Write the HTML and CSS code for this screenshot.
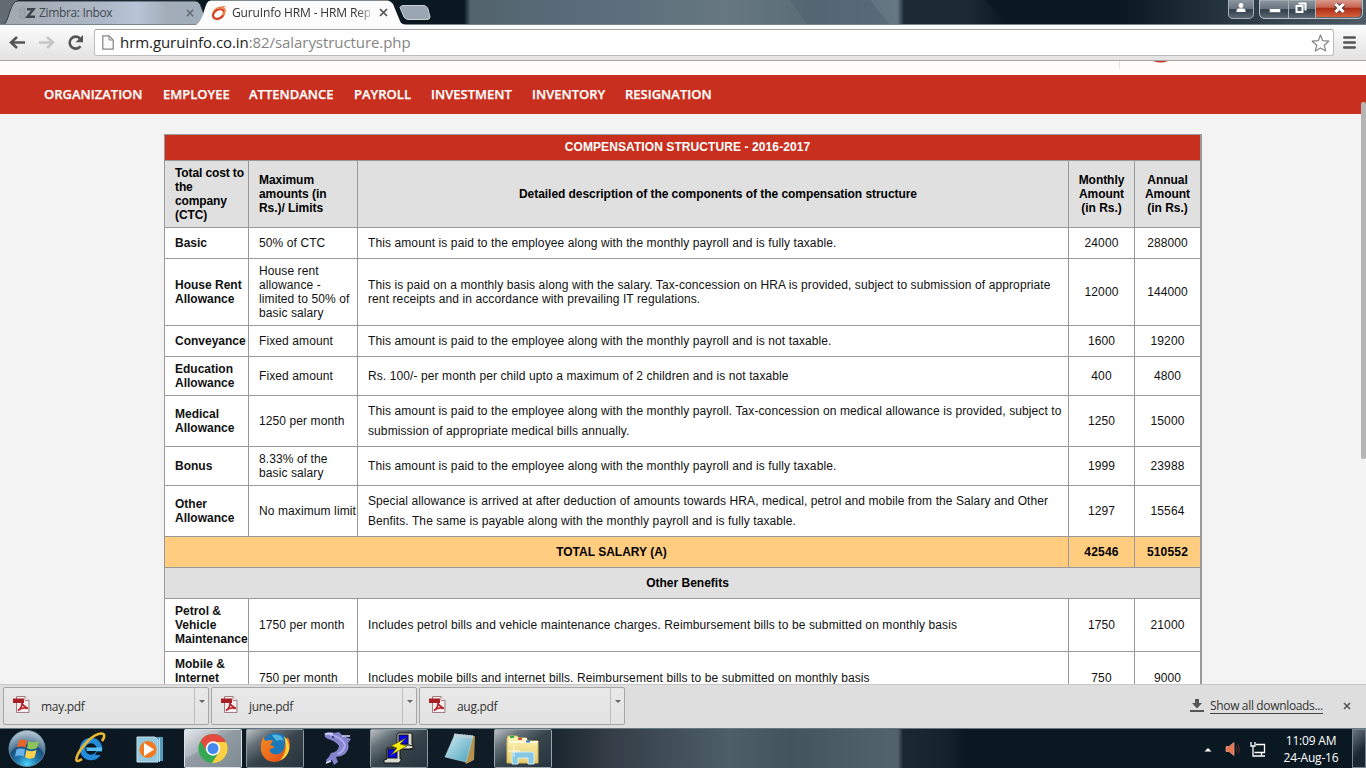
FILE: index.html
```html
<!DOCTYPE html>
<html lang="en">
<head>
<meta charset="utf-8">
<title>GuruInfo HRM - HRM Reports</title>
<link rel="stylesheet" href="styles.css">
</head>
<body>
<div class="screen">
<header class="titlebar">
  <svg class="glass" width="1366" height="25" viewBox="0 0 1366 25">
    <defs>
      <linearGradient id="gl" x1="0" x2="1"><stop offset="0" stop-color="#0a1822"/><stop offset=".015" stop-color="#53646e"/><stop offset=".3" stop-color="#5a6d7b"/><stop offset=".6" stop-color="#66777f"/><stop offset=".8" stop-color="#5a6c77"/><stop offset=".985" stop-color="#667884"/><stop offset="1" stop-color="#1c2a34"/></linearGradient>
      <linearGradient id="tabg" x1="0" x2="1"><stop offset="0" stop-color="#a2a9ae"/><stop offset=".5" stop-color="#aeb9c9"/><stop offset=".65" stop-color="#b7c5d7"/><stop offset=".8" stop-color="#a3adb9"/><stop offset="1" stop-color="#a0adba"/></linearGradient>
      <linearGradient id="rt" x1="0" x2="1"><stop offset="0" stop-color="#0a1822"/><stop offset="1" stop-color="#4c5b65"/></linearGradient>
      <linearGradient id="edge" x1="0" x2="1"><stop offset="0" stop-color="#1c2a34"/><stop offset=".6" stop-color="#1c2a34"/><stop offset="1" stop-color="#0a1822"/></linearGradient>
      <linearGradient id="cl" x1="0" x2="0" y1="0" y2="1"><stop offset="0" stop-color="#d99a8c"/><stop offset=".42" stop-color="#c86450"/><stop offset=".5" stop-color="#ad2d16"/><stop offset="1" stop-color="#d5603c"/></linearGradient>
      <linearGradient id="wb" x1="0" x2="0" y1="0" y2="1"><stop offset="0" stop-color="#8b969f"/><stop offset=".48" stop-color="#68747e"/><stop offset=".52" stop-color="#303e49"/><stop offset="1" stop-color="#5f6c76"/></linearGradient>
    </defs>
    <rect width="1366" height="25" fill="#0a1822"/>
    <path d="M0 0H18L6 25H0Z" fill="#626b72"/>
    <rect x="464" width="440" height="25" fill="url(#gl)"/>
    <path d="M790 0H870L890 25H808Z" fill="#50636f" opacity=".6"/>
    <path d="M904 0H985L1008 25H904Z" fill="url(#edge)"/>
    <rect x="1120" width="246" height="25" fill="url(#rt)"/>
    <path d="M4 24.500C8 22 10 7 14 3Q15 1 18 1H195Q198 1 200 4L208 24.500Z" fill="url(#tabg)" stroke="#303d47"/>
    <path d="M400 7.500Q401 5.500 403 5.500H424Q427 6 428 9L430 17Q430 19.500 427 19.500H408Q405 19 404 17Z" fill="#9aa6b1" stroke="#cbd1d6"/>
    <path d="M0 24.500H1366" stroke="#7c848a"/>
    <path d="M196 25C203 21 204 8 207 3Q208 .5 211 .5H388Q391 1 393 4L400 21Q401 24 406 25Z" fill="#fcfcfc"/>
    <path d="M1228.500 0V14Q1228.500 18.500 1233 18.500H1248Q1253.500 18.500 1253.500 14V0" fill="url(#wb)" stroke="#a4afb7"/>
    <path d="M1259.500 0V13Q1259.500 18.500 1265 18.500H1357Q1362.500 18.500 1362.500 13V0Z" fill="url(#wb)" stroke="#b9c1c7"/>
    <path d="M1316 0V17H1356Q1361 17 1361 12V0Z" fill="url(#cl)"/>
    <path d="M1288.500 0V18M1315.500 0V18" stroke="#a9b2b9"/>
    <path d="M1236.500 12V10Q1237 8.500 1239 8.500H1243Q1245 8.500 1245.500 10V12Z" fill="#fff"/><circle cx="1241" cy="5.500" r="2.400" fill="#fff"/>
    <rect x="1269.500" y="8.500" width="11" height="4" rx="1" fill="#fff" stroke="#68727b"/>
    <path d="M1298.500 3.500H1305.500V10.500" fill="none" stroke="#fff" stroke-width="2"/><rect x="1296.500" y="6" width="6" height="6" fill="#53606b" stroke="#fff" stroke-width="2"/>
    <path d="M1335.500 4.500 1343.500 11.500M1343.500 4.500 1335.500 11.500" stroke="#5d4243" stroke-width="5"/><path d="M1335.500 4 1343.500 12M1343.500 4 1335.500 12" stroke="#fff" stroke-width="3"/>
  </svg>
  <div class="tab tab-idle">
    <svg width="17" height="12" viewBox="0 0 17 12"><path d="M1 1 6 6 1 11M3 1H6V11H1V1" fill="none" stroke="#90979d"/><path d="M8 2.200H14.500L8.500 9.800H16" fill="none" stroke="#3d4348" stroke-width="2.400"/></svg>
    <span class="tab-text t1">Zimbra: Inbox</span>
    <svg class="x" width="8" height="8" viewBox="0 0 8 8"><path d="M.8.8 7.200 7.200M7.200.8.8 7.200" stroke="#62696f" stroke-width="1.500"/></svg>
  </div>
  <div class="tab tab-live">
    <svg width="18" height="16" viewBox="0 0 18 16"><ellipse cx="7.500" cy="9" rx="6" ry="4.300" transform="rotate(-35 7.500 9)" fill="#fff" stroke="#d9401f" stroke-width="2.300"/><path d="M1 7Q5 0 16 1Q12 1.500 11 4Q5 2.500 1 7Z" fill="#ee8154"/><path d="M12 2.500Q16 5 12 10" fill="none" stroke="#ef8b55" stroke-width="2"/></svg>
    <span class="tab-text t2">GuruInfo HRM - HRM Rep</span>
    <svg class="x" width="9" height="9" viewBox="0 0 9 9"><path d="M1 1 8 8M8 1 1 8" stroke="#555" stroke-width="1.700"/></svg>
  </div>
</header>
<div class="toolbar">
  <svg class="navicons" width="94" height="35" viewBox="0 0 94 35">
    <path d="M11 17.500H25M17 12 11 17.500 17 23" fill="none" stroke="#555" stroke-width="2.500"/>
    <path d="M39 17.500H52M47 12 53 17.500 47 23" fill="none" stroke="#c6c6c6" stroke-width="2.500"/>
    <path d="M80.500 21.200A6 6 0 1 1 80 13.500" fill="none" stroke="#555" stroke-width="2.600"/><path d="M83 10V17.300H75.500Z" fill="#555"/>
  </svg>
  <div class="omnibox">
    <svg width="12" height="16" viewBox="0 0 12 16"><path d="M.8.800H7L11.200 5V14.200H.8Z" fill="#fafafa" stroke="#858585" stroke-width="1.200"/><path d="M7 1V5H11" fill="none" stroke="#858585"/></svg>
    <span class="url"><b>hrm.guruinfo.co.in</b>:82/salarystructure.php</span>
    <svg class="star" width="19" height="18" viewBox="0 0 19 18"><path d="M9.500 1 11.700 6.700 17.800 7.200 13.200 11.200 14.700 17 9.500 13.900 4.300 17 5.800 11.200 1.200 7.200 7.300 6.700Z" fill="#fff" stroke="#858585" stroke-width="1.200" stroke-linejoin="round"/></svg>
  </div>
  <svg class="burger" width="13" height="13" viewBox="0 0 13 13"><path d="M1.300 1.500H11.700M1.300 6.500H11.700M1.300 11.500H11.700" stroke="#555" stroke-width="2.600" stroke-linecap="round"/></svg>
</div>
<main class="page">
  <div class="brandstrip"><svg width="60" height="14" viewBox="0 0 60 14"><path d="M.5 0V8" stroke="#e5e3e2"/><path d="M34 0H49Q42 3 34 0Z" fill="#cb321f"/></svg></div>
  <nav class="menu">
    <a class="m1">ORGANIZATION</a><a class="m2">EMPLOYEE</a><a class="m3">ATTENDANCE</a><a class="m4">PAYROLL</a><a class="m5">INVESTMENT</a><a class="m6">INVENTORY</a><a class="m7">RESIGNATION</a>
  </nav>
  <i class="scroll"></i>
  <section class="sheet">
    <div class="row wide banner h26"><div class="c">COMPENSATION STRUCTURE - 2016-2017</div></div>
    <div class="row head h67"><div class="tight">Total cost to<br>the<br>company<br>(CTC)</div><div>Maximum<br>amounts (in<br>Rs.)/ Limits</div><div class="c">Detailed description of the components of the compensation structure</div><div class="c">Monthly<br>Amount<br>(in Rs.)</div><div class="c">Annual<br>Amount<br>(in Rs.)</div></div>
    <div class="row h31"><div>Basic</div><div>50% of CTC</div><div>This amount is paid to the employee along with the monthly payroll and is fully taxable.</div><div>24000</div><div>288000</div></div>
    <div class="row h67"><div>House Rent<br>Allowance</div><div>House rent<br>allowance -<br>limited to 50% of<br>basic salary</div><div>This is paid on a monthly basis along with the salary. Tax-concession on HRA is provided, subject to submission of appropriate<br>rent receipts and in accordance with prevailing IT regulations.</div><div>12000</div><div>144000</div></div>
    <div class="row h31"><div>Conveyance</div><div>Fixed amount</div><div>This amount is paid to the employee along with the monthly payroll and is not taxable.</div><div>1600</div><div>19200</div></div>
    <div class="row h39"><div>Education<br>Allowance</div><div>Fixed amount</div><div>Rs. 100/- per month per child upto a maximum of 2 children and is not taxable</div><div>400</div><div>4800</div></div>
    <div class="row h51"><div>Medical<br>Allowance</div><div>1250 per month</div><div class="loose">This amount is paid to the employee along with the monthly payroll. Tax-concession on medical allowance is provided, subject to<br>submission of appropriate medical bills annually.</div><div>1250</div><div>15000</div></div>
    <div class="row h39"><div>Bonus</div><div>8.33% of the<br>basic salary</div><div>This amount is paid to the employee along with the monthly payroll and is fully taxable.</div><div>1999</div><div>23988</div></div>
    <div class="row h51"><div>Other<br>Allowance</div><div>No maximum limit</div><div class="loose closer">Special allowance is arrived at after deduction of amounts towards HRA, medical, petrol and mobile from the Salary and Other<br>Benfits. The same is payable along with the monthly payroll and is fully taxable.</div><div>1297</div><div>15564</div></div>
    <div class="row total h31"><div class="c">TOTAL SALARY (A)</div><div class="c">42546</div><div class="c">510552</div></div>
    <div class="row wide other h31"><div class="c">Other Benefits</div></div>
    <div class="row h53"><div>Petrol &amp;<br>Vehicle<br>Maintenance</div><div>1750 per month</div><div>Includes petrol bills and vehicle maintenance charges. Reimbursement bills to be submitted on monthly basis</div><div>1750</div><div>21000</div></div>
    <div class="row h53"><div>Mobile &amp;<br>Internet</div><div>750 per month</div><div>Includes mobile bills and internet bills. Reimbursement bills to be submitted on monthly basis</div><div>750</div><div>9000</div></div>
  </section>
</main>
<svg class="symbols" width="0" height="0"><symbol id="pdf" viewBox="0 0 17 17"><path d="M3.500.5H12L16 4.500V16.500H3.500Z" fill="#f4efef" stroke="#a27f7f"/><path d="M12 .5V4.500H16" fill="#fff" stroke="#a27f7f"/><path d="M0 2.500H11V7H0Z" fill="#a91f25"/><path d="M9 7Q10 10 15 12.500Q10 10.500 5 14.500Q9 12 9 7Z" fill="none" stroke="#b92329" stroke-width="1.600"/></symbol></svg>
<div class="shelf">
  <div class="file"><svg width="17" height="17"><use href="#pdf"/></svg><span>may.pdf</span><i><b></b></i></div>
  <div class="file"><svg width="17" height="17"><use href="#pdf"/></svg><span>june.pdf</span><i><b></b></i></div>
  <div class="file"><svg width="17" height="17"><use href="#pdf"/></svg><span>aug.pdf</span><i><b></b></i></div>
  <div class="all"><svg width="14" height="14" viewBox="0 0 14 14"><path d="M5 0H9V4H12L7 9.500 2 4H5ZM0 11H14V13H0Z" fill="#555"/></svg><span>Show all downloads...</span><svg class="close" width="8" height="8" viewBox="0 0 8 8"><path d="M1 1 7 7M7 1 1 7" stroke="#555" stroke-width="1.600"/></svg></div>
</div>
<footer class="taskbar">
  <svg class="apps" width="610" height="40" viewBox="0 0 610 40">
    <defs>
      <radialGradient id="orb" cx=".5" cy=".95" r=".95"><stop offset="0" stop-color="#4fd6fb"/><stop offset=".3" stop-color="#1f7bb0"/><stop offset=".58" stop-color="#1b4f7c"/><stop offset=".62" stop-color="#4f7895"/><stop offset="1" stop-color="#c3d0d9"/></radialGradient>
      <linearGradient id="btn" x1="0" y1="0" x2="1" y2="1"><stop offset="0" stop-color="#e0e5e8"/><stop offset=".45" stop-color="#929ba3"/><stop offset="1" stop-color="#7e8993"/></linearGradient>
      <linearGradient id="btd" x1="0" y1="0" x2="1" y2="1"><stop offset="0" stop-color="#bfc5c8"/><stop offset=".25" stop-color="#67727a"/><stop offset=".5" stop-color="#38444c"/><stop offset="1" stop-color="#26343d"/></linearGradient>
      <linearGradient id="ff" x1="0" y1="0" x2="1" y2="1"><stop offset="0" stop-color="#f08a22"/><stop offset=".5" stop-color="#ee6c1c"/><stop offset="1" stop-color="#d7441a"/></linearGradient>
      <linearGradient id="np" x1="0" y1="0" x2="1" y2="1"><stop offset="0" stop-color="#d6edf2"/><stop offset="1" stop-color="#46a0bd"/></linearGradient>
      <linearGradient id="fd" x1="0" y1="0" x2="0" y2="1"><stop offset="0" stop-color="#fff5b4"/><stop offset="1" stop-color="#e8cc6c"/></linearGradient>
    </defs>
    <circle cx="27" cy="20.500" r="18" fill="url(#orb)" stroke="#5f87a0"/>
    <path d="M19 12.500Q22 10.500 27 12.500L25.500 19.500Q21 17.500 17 19.500Z" fill="#e8652c"/><path d="M28.500 13Q33 15.500 39 13L37 20Q31 22.500 27 20Z" fill="#91c456"/><path d="M16.500 21.500Q20 19.500 25 21.500L23.500 28.500Q19 26.500 15 28.500Z" fill="#68b3e9"/><path d="M26.500 22Q31 24.500 36.500 22L34.500 29.500Q29 32 25 29Z" fill="#ffd24c"/>
    <circle cx="91" cy="21" r="8.500" fill="none" stroke="#258cdc" stroke-width="5.500"/><path d="M86 19.500H102V23H87Z" fill="#5bc0f3"/><path d="M97 23.500H104V27H95Z" fill="#0c1922"/><path d="M102 13C109 3 98 3 88 13C76 25 72 38 82 31" fill="none" stroke="#e9b934" stroke-width="2.600"/>
    <path d="M145 9H163V33H150Z" fill="#579cbd"/><path d="M137 9H155L158 12V34H137Z" fill="#93c8df" stroke="#c6e3ed"/><path d="M159.500 10V34" stroke="#b5dcea"/><circle cx="148" cy="21.500" r="8.500" fill="#f27a20"/><path d="M144 15V28L154 21.500Z" fill="#fff"/>
    <rect x="184.500" y="1.500" width="57" height="38" rx="1" fill="url(#btn)" stroke="#dce1e4"/><path d="M185 30Q207 22 220 2H185Z" fill="#fff" opacity=".17"/>
    <circle cx="213" cy="20.500" r="14.500" fill="#35a853"/><path d="M200.500 13.200A14.500 14.500 0 0 1 226 14L213 14.500Q207 15 206 22Z" fill="#e44b3f"/><path d="M213 14H226A14.500 14.500 0 0 1 212 35L219 24Z" fill="#fdd043"/><circle cx="213" cy="20.500" r="7.200" fill="#fff"/><circle cx="213" cy="20.500" r="5.500" fill="#4788ed"/>
    <rect x="246.500" y="1.500" width="57" height="38" rx="1" fill="url(#btd)" stroke="#8e999f"/>
    <circle cx="275.500" cy="18.500" r="13.500" fill="#1c78b8"/><path d="M272 7Q281 5 284 13Q280 11 277 13Q273 9 272 7Z" fill="#51b6df"/>
    <path d="M264 8Q263 11 266 13Q270 11 273 13L270 17Q275 18 274 20Q269 20 270 24Q276 29 282 24Q286 19 285 12L288 9Q292 17 288 25Q283 34 274 34Q263 33 261 23Q260 14 264 8Z" fill="url(#ff)"/><path d="M284 8Q292 16 288 25Q285 31 280 32Q289 23 284 8Z" fill="#fbd437"/>
    <path d="M324.500 5.500Q329 3 334 5L339 4L343 8L351 11L348 15Q350 21 345 26Q341 29 336 29L338 34L334 37L332 32L327 35L326 32Q329 30 331 25Q338 24 339 18Q336 13 328 11L325 9Z" fill="#8582cd"/><path d="M330 7Q342 9 345 17Q344 23 338 26" fill="none" stroke="#adaceb" stroke-width="2"/><path d="M325 6H333M342 8H350M326 35 331 33" stroke="#dddcf9" stroke-width="1.500"/><circle cx="333" cy="9" r="1" fill="#262553"/>
    <rect x="370.500" y="1.500" width="57" height="38" rx="1" fill="url(#btd)" stroke="#8e999f"/>
    <path d="M398 5H412V16L414 19V21H397V7Z" fill="#d9d9d0" stroke="#111"/><rect x="399" y="7" width="9" height="9" fill="#0707e8" stroke="#111"/><path d="M394 17H409L413 18V20L410 21H394Z" fill="#d9d9d0" stroke="#111"/><path d="M387 20H400V31H402L399 35H384V32L387 31Z" fill="#d9d9d0" stroke="#111"/><rect x="388" y="21" width="9" height="9" fill="#0707e8" stroke="#111"/><path d="M406 10 391 18 397 20 391 27 407 18 400 16Z" fill="#f5ec08" stroke="#464310" stroke-width=".6"/>
    <path d="M456 7 475 8 474 32 466 36Z" fill="#b1934f"/><path d="M455 6 473 8 466 34 445 29Z" fill="url(#np)" stroke="#b2d5dd" stroke-width=".6"/><path d="M454 7 473 9" stroke="#cad1d3" stroke-width="3" stroke-dasharray="1.500 1"/>
    <rect x="494.500" y="1.500" width="57" height="38" rx="1" fill="url(#btd)" stroke="#9ca4a7"/>
    <path d="M508 8H517L519 10H526L528 13H538V35H507V11Z" fill="url(#fd)" stroke="#d2b85c"/><path d="M509 14H538M517 11H527" stroke="#fffadf" stroke-width="2"/><path d="M510 9H514" stroke="#35a84a" stroke-width="2"/><path d="M518 11H522" stroke="#d84d34" stroke-width="2"/><path d="M526 13.500H530" stroke="#337ed0" stroke-width="2"/><path d="M512 36V26Q512 24 515 24H531Q534 24 534 26V36H528V30H518V36Z" fill="#84c8e5" stroke="#d3edf5"/><path d="M514 17V29M508 23H520" stroke="#fff" stroke-width=".8"/>
  </svg>
  <div class="tray">
    <svg width="70" height="20" viewBox="0 0 70 20"><path d="M1.500 12.500 5 9 8.500 12.500Z" fill="#fff"/><path d="M23 7.500H26L31 3.500V16.500L26 12.500H23Z" fill="#e57652" stroke="#f0a38c" stroke-width=".7"/><path d="M33 7Q35 10 33 13M35 5Q38 10 35 15" fill="none" stroke="#5a2a25"/><path d="M53 5.500H61.500V13.500H51.500M55 17H62M58.500 14V17" fill="none" stroke="#fff" stroke-width="1.300"/><path d="M48 3V7H52V3M50 7V17H55" fill="none" stroke="#fff" stroke-width="1.300"/></svg>
    <div class="clock">11:09 AM<br><span>24-Aug-16</span></div>
    <i class="peek"></i>
  </div>
</footer>
</div>
</body>
</html>
```
FILE: styles.css
```css
* { box-sizing: border-box; }
body { margin: 0; overflow: hidden; }
.screen { width: 1366px; height: 768px; display: flex; flex-direction: column; overflow: hidden; font-family: "Open Sans", "Noto Sans", sans-serif; }
svg { display: block; flex: none; }
.titlebar { height: 25px; position: relative; display: flex; flex: none; }
.glass { position: absolute; left: 0; top: 0; }
.tab { position: relative; display: flex; align-items: center; height: 25px; font-size: 12px; white-space: nowrap; }
.tab-idle { width: 197px; padding-left: 19px; color: #42494f; }
.tab-live { width: 209px; padding-left: 14px; color: #333; }
.tab-text { flex: none; }
.t1 { margin-left: 3px; width: 146px; letter-spacing: -.35px; }
.t2 { margin-left: 3px; width: 138px; letter-spacing: -.15px; -webkit-mask-image: linear-gradient(90deg, #000 90%, rgba(0,0,0,.35)); mask-image: linear-gradient(90deg, #000 90%, rgba(0,0,0,.35)); }
.x { margin-left: 1px; }
.tab-live .x { margin-left: 9px; }
.toolbar { height: 36px; flex: none; display: flex; align-items: flex-start; background: linear-gradient(#fcfcfc, #e2e2e2); border-bottom: 1px solid #a6a6a6; }
.omnibox { width: 1240px; height: 27px; margin-top: 4px; border: 1px solid #bcbcbc; border-top-color: #a3a3a3; border-radius: 3px; background: #fff; display: flex; align-items: center; padding-left: 7px; }
.url { margin-left: 6px; font-size: 15px; line-height: 25px; color: #858585; letter-spacing: -.07px; white-space: nowrap; }
.url b { font-weight: 400; color: #222; }
.star { margin-left: auto; margin-right: 3px; }
.burger { margin: 11px 0 0 9px; }
.page { height: 623px; flex: none; background: #f3f3f3; overflow: hidden; position: relative; }
.brandstrip { height: 14px; background: #fefcfb; padding-left: 1119px; }
.menu { height: 39px; background: #c92f1e; color: #fff; display: flex; align-items: center; padding: 0 0 2px 44px; font-size: 13px; font-weight: 600; white-space: nowrap; -webkit-text-stroke: .25px #fff; }
.menu a { flex: none; }
.m1 { width: 119px; } .m2 { width: 86px; } .m3 { width: 105px; } .m4 { width: 77px; } .m5 { width: 101px; } .m6 { width: 93px; }
.scroll { position: absolute; right: 0; top: 41px; width: 5px; height: 357px; background: #b5b5b5; border-radius: 2px; }
.sheet { width: 1038px; margin: 20px 0 0 164px; border-right: 2px solid #999; background: #fff; color: #111; font: 12px/14px "Liberation Sans", Arial, sans-serif; letter-spacing: .1px; }
.row { display: grid; grid-template-columns: 84px 109px 711px 66px 66px; }
.row > div { border-top: 1px solid #999; border-left: 1px solid #999; padding-left: 10px; display: flex; align-items: center; white-space: nowrap; }
.row > div:first-child { font-weight: 700; letter-spacing: 0; }
.row > div:nth-child(n+4), .row > .c { justify-content: center; text-align: center; }
.row > div:nth-child(n+4), .total > .c { padding-left: 0; }
.row.total > .c:first-child { padding-right: 10px; }
.row.wide { grid-template-columns: 1036px; }
.row.total { grid-template-columns: 904px 66px 66px; background: #ffcc80; font-weight: 700; color: #000; letter-spacing: .2px; }
.head { background: #e0e0e0; font-weight: 700; color: #000; letter-spacing: -.05px; }
.row > .tight:first-child { letter-spacing: -.12px; }
.banner { background: #c92f1e; color: #fff; }
.banner > .c { padding-bottom: 2px; }
.row.banner > .c:first-child { letter-spacing: .09px; }
.other { background: #e0e0e0; color: #000; }
.row .loose { line-height: 20px; }
.row .closer { letter-spacing: .09px; }
.h26 { height: 26px; } .h31 { height: 31px; } .h39 { height: 39px; } .h51 { height: 51px; } .h53 { height: 53px; } .h67 { height: 67px; }
.h53:last-child > div:first-child { align-items: flex-start; padding-top: 5px; }
.symbols { position: absolute; }
.shelf { height: 44px; flex: none; background: #dedede; border-top: 1px solid #c9c9c9; display: flex; padding: 2px 0 0 3px; gap: 2px; font-size: 12px; color: #333; }
.file { width: 206px; height: 38px; border: 1px solid #a6a6a6; border-radius: 2px; background: linear-gradient(#e9e9e9, #e2e2e2); display: flex; align-items: center; padding-left: 9px; }
.file svg { margin-top: -3px; }
.file span { margin-left: 11px; margin-top: 1px; letter-spacing: -.3px; }
.file i { margin-left: auto; width: 14px; height: 36px; border-left: 1px solid #bdbdbd; padding: 12px 0 0 4px; }
.file b { display: block; width: 0; border: 3px solid transparent; border-top-color: #666; border-bottom: 0; }
.all { margin-left: auto; margin-right: 15px; height: 38px; display: flex; align-items: center; white-space: nowrap; }
.all span { margin: 0 20px 0 6px; width: 113px; line-height: 15px; border-bottom: 1px solid #444; letter-spacing: -.34px; }
.taskbar { height: 40px; flex: none; display: flex; border-top: 1px solid #65777f; background: linear-gradient(90deg, #0a1721 0, #101d27 530px, #353d45 610px, #42515b 680px, #4d5e68 730px, #43545f 790px, #52626c 890px, #52626c 898px, #1a2832 903px, #15232d 945px, #0a1822 965px, #0a1822 1366px); }
.apps { margin-top: -1px; }
.tray { margin-left: auto; display: flex; align-items: center; color: #fff; }
.clock { width: 72px; margin-left: 2px; text-align: center; font-size: 12px; line-height: 17px; letter-spacing: -.2px; }
.peek { width: 14px; height: 39px; margin-left: 5px; border: 1px solid #78858e; background: linear-gradient(135deg, #69757d, #1a2832 60%); }
```
